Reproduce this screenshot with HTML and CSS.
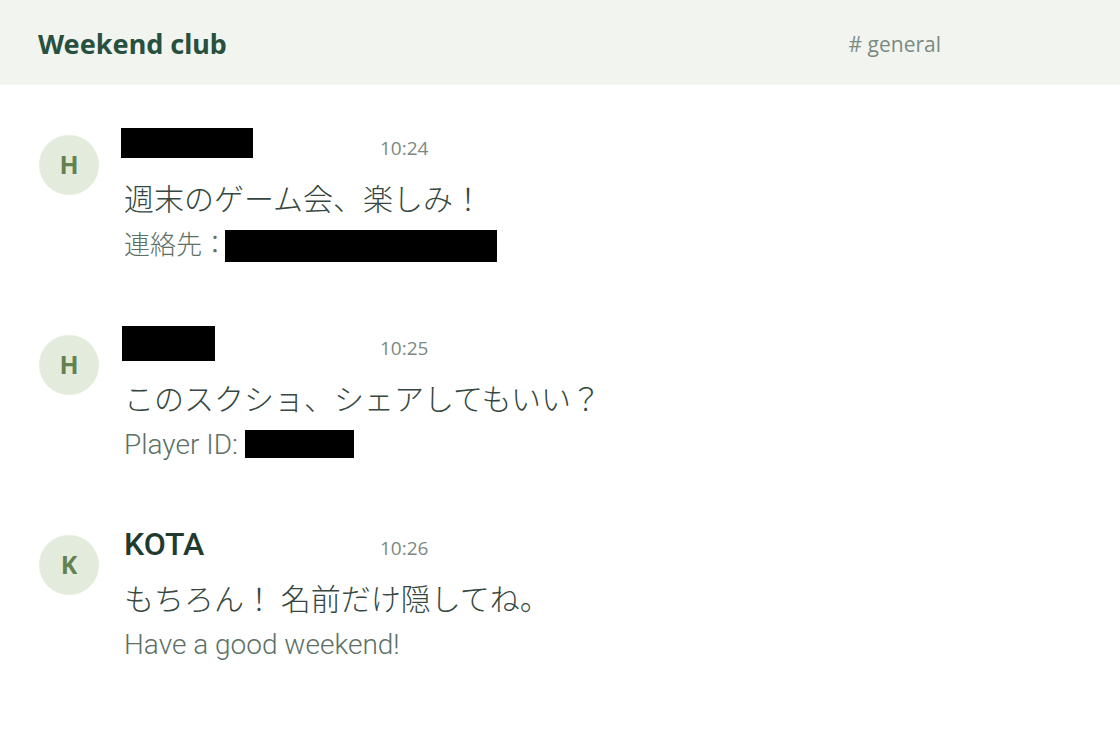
FILE: index.html
```html
<!DOCTYPE html>
<html lang="ja">
<head>
  <meta charset="UTF-8" />
  <meta name="viewport" content="width=device-width, initial-scale=1" />
  <title>Weekend club</title>
  <link rel="stylesheet" href="styles.css">
</head>
<body>
  <!-- Channel header -->
  <header class="topbar">
    <h1>Weekend club</h1>
    <span class="channel"># general</span>
  </header>

  <!-- Messages -->
  <main class="messages">
    <article class="message">
      <div class="avatar">H</div>
      <div class="body">
        <div class="meta">
          <h2 class="name"><span class="redacted name-long"></span></h2>
          <time>10:24</time>
        </div>
        <p class="text">週末のゲーム会、楽しみ！</p>
        <p class="detail">連絡先：<span class="redacted contact"></span></p>
      </div>
    </article>

    <article class="message">
      <div class="avatar">H</div>
      <div class="body">
        <div class="meta">
          <h2 class="name"><span class="redacted name-short"></span></h2>
          <time>10:25</time>
        </div>
        <p class="text">このスクショ、シェアしてもいい？</p>
        <p class="detail latin">Player ID: <span class="redacted player-id"></span></p>
      </div>
    </article>

    <article class="message">
      <div class="avatar">K</div>
      <div class="body">
        <div class="meta">
          <h2 class="name">KOTA</h2>
          <time>10:26</time>
        </div>
        <p class="text">もちろん！ 名前だけ隠してね。</p>
        <p class="detail latin">Have a good weekend!</p>
      </div>
    </article>
  </main>
</body>
</html>
```
FILE: styles.css
```css
* {
  margin: 0;
  padding: 0;
  box-sizing: border-box;
}
body {
  font-family: "Open Sans", "Noto Sans CJK JP", sans-serif;
  background-color: #fff;
  color: #354740;
}

/* Channel header */
.topbar {
  display: flex;
  align-items: center;
  justify-content: space-between;
  height: 85px;
  padding: 2px 179px 0 38px;
  background-color: #f2f5ef;
}
.topbar h1 {
  font-family: "Noto Sans", sans-serif;
  font-size: 27px;
  line-height: 40px;
  color: #28503f;
}
.channel {
  font-size: 21px;
  color: #7a8a80;
}

/* Messages */
.messages {
  padding: 39px;
}
.message {
  display: flex;
  gap: 25px;
  min-height: 200px;
}
.avatar {
  flex: none;
  width: 60px;
  height: 60px;
  margin-top: 11px;
  border-radius: 50%;
  background-color: #e3ecdc;
  color: #648250;
  font-size: 25px;
  font-weight: bold;
  line-height: 58px;
  text-align: center;
}
.meta {
  display: flex;
  height: 48px;
}
.name {
  width: 256px;
  font-family: Roboto, "Noto Sans CJK JP", sans-serif;
  font-size: 32px;
  font-weight: 500;
  line-height: 40px;
  color: #203a30;
}
.meta time {
  font-size: 19px;
  line-height: 48px;
  color: #7a8a80;
}
.text {
  font-family: "Noto Sans CJK JP", sans-serif;
  font-size: 30px;
  font-weight: 300;
  line-height: 50px;
}
.detail {
  display: flex;
  font-family: "Noto Sans CJK JP", sans-serif;
  font-size: 26px;
  font-weight: 300;
  line-height: 42px;
  color: #5d7065;
  white-space: pre;
}
.latin {
  font-family: Roboto, "Noto Sans CJK JP", sans-serif;
  font-size: 28px;
  line-height: 46px;
}

/* Blacked out names and ids */
.redacted {
  display: block;
  background-color: #000;
}
.name-long {
  width: 132px;
  height: 30px;
  margin: 4px 0 0 -3px;
}
.name-short {
  width: 93px;
  height: 35px;
  margin: 2px 0 0 -2px;
}
.contact {
  width: 272px;
  height: 32px;
  margin: 8px 0 0 -3px;
}
.player-id {
  width: 109px;
  height: 28px;
  margin-top: 8px;
}
```
